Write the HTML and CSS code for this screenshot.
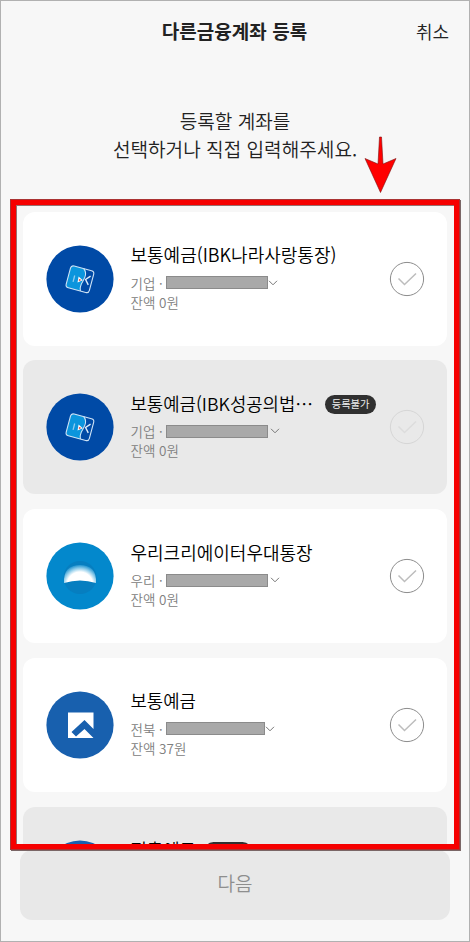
FILE: index.html
```html
<!DOCTYPE html>
<html lang="ko">
  <head>
    <meta charset="utf-8">
    <title>다른금융계좌 등록</title>
    <link rel="stylesheet" href="styles.css">
  </head>
  <body>
    <svg class="defs" width="0" height="0">
      <defs>
        <radialGradient id="wooriGlow" gradientUnits="userSpaceOnUse" cx="34" cy="43" r="21">
          <stop offset="0.62" stop-color="#ffffff" />
          <stop offset="0.8" stop-color="#8bcbea" />
          <stop offset="1" stop-color="#0384c8" />
        </radialGradient>
        <symbol id="ibk" viewBox="0 0 68 68">
          <circle cx="34" cy="34" r="33.6" fill="#004aa6" />
          <g transform="rotate(15 34 34)">
            <path d="M25 23h11q3 3 2 7t-1 8q-1 4 .5 7.500h-12.500q-3 0-3-3v-16.500q0-3 3-3z" fill="#0b95dd" />
            <rect x="22" y="23" width="24" height="22.500" rx="3" fill="none" stroke="#cfe4f6" stroke-width="1.100" />
            <path d="M35 23q4 3.500 3.200 8t-1.700 8q-.5 3.500 1 6.500" fill="none" stroke="#cfe4f6" stroke-width="1" />
            <path d="M28 32v6.500" stroke="#8dccef" stroke-width="1.300" />
            <path d="M43.500 28.500l-4 4.500 4 4.500" fill="none" stroke="#dcecf8" stroke-width="1.400" />
            <path d="M32 32l5 2.500-4.500 3.500z" fill="#fff" />
            <circle cx="34" cy="35" r="1" fill="#e4574e" />
          </g>
        </symbol>
        <symbol id="woori" viewBox="0 0 68 68">
          <circle cx="34" cy="34" r="33.600" fill="#0388cc" />
          <circle cx="34" cy="35.500" r="16.500" fill="#067ec0" />
          <path d="M18 41q-1-18 16-18t16 18q-16-5-32 0z" fill="url(#wooriGlow)" />
        </symbol>
        <symbol id="jeonbuk" viewBox="0 0 68 68">
          <circle cx="34" cy="34" r="33.600" fill="#1860ae" />
          <path d="M22 21.500H47.500V38L38.500 29 25.500 41L30 45.500 38.500 38 47.500 47H22z" fill="#fff" />
        </symbol>
        <symbol id="check" viewBox="0 0 36 36">
          <circle cx="18" cy="18" r="16.600" fill="none" stroke="var(--ring)" stroke-width="1" />
          <path d="M9.500 17.500l6 6 11.500-11" fill="none" stroke="var(--tick)" stroke-width="1.500" />
        </symbol>
        <symbol id="chevron" viewBox="0 0 10 6">
          <path d="M1 .8l4 4 4-4" fill="none" stroke="#777" stroke-width="1" />
        </symbol>
      </defs>
    </svg>

    <div class="app">
      <header class="header">
        <h1>다른금융계좌 등록</h1>
        <a class="cancel">취소</a>
      </header>

      <p class="intro">등록할 계좌를<br>선택하거나 직접 입력해주세요.</p>

      <ul class="accounts">
        <li class="card">
          <svg class="logo"><use href="#ibk" /></svg>
          <div class="info">
            <div class="name name-long">보통예금(IBK나라사랑통장)</div>
            <div class="number">기업 · <span class="mask"></span><svg class="chevron near"><use href="#chevron" /></svg></div>
            <div class="balance">잔액 0원</div>
          </div>
          <svg class="check"><use href="#check" /></svg>
        </li>
        <li class="card disabled">
          <svg class="logo"><use href="#ibk" /></svg>
          <div class="info">
            <div class="name"><span>보통예금(IBK성공의법⋯</span><span class="badge">등록불가</span></div>
            <div class="number">기업 · <span class="mask"></span><svg class="chevron"><use href="#chevron" /></svg></div>
            <div class="balance">잔액 0원</div>
          </div>
          <svg class="check"><use href="#check" /></svg>
        </li>
        <li class="card">
          <svg class="logo"><use href="#woori" /></svg>
          <div class="info">
            <div class="name name-long">우리크리에이터우대통장</div>
            <div class="number">우리 · <span class="mask"></span><svg class="chevron"><use href="#chevron" /></svg></div>
            <div class="balance">잔액 0원</div>
          </div>
          <svg class="check"><use href="#check" /></svg>
        </li>
        <li class="card">
          <svg class="logo"><use href="#jeonbuk" /></svg>
          <div class="info">
            <div class="name">보통예금</div>
            <div class="number">전북 · <span class="mask short"></span><svg class="chevron near"><use href="#chevron" /></svg></div>
            <div class="balance">잔액 37원</div>
          </div>
          <svg class="check"><use href="#check" /></svg>
        </li>
        <!-- only the top of this one shows above the button -->
        <li class="card disabled partial">
          <svg class="logo"><use href="#jeonbuk" /></svg>
          <div class="info">
            <div class="name">저축예금<span class="badge tight"></span></div>
          </div>
        </li>
      </ul>

      <button class="next">다음</button>

      <!-- guide marks over the list -->
      <svg class="arrow" viewBox="0 0 34 58">
        <path d="M16.500 1h2l1.500 27 13-5.500-15.500 34-15.500-34 13 5.500z" fill="#f00" stroke="#7a1010" stroke-width=".6" />
      </svg>
      <div class="frame"></div>
    </div>
  </body>
</html>
```

FILE: styles.css
```css
* {
  box-sizing: border-box;
}

body {
  margin: 0;
  font-family: "Noto Sans CJK KR", sans-serif;
  color: #222;
}

.defs {
  position: absolute;
}

.app {
  position: relative;
  display: flex;
  flex-direction: column;
  height: 942px;
  border: 1px solid #b1b1b1;
  background: #f7f7f7;
  overflow: hidden;
}

.header {
  display: grid;
  grid-template-columns: 1fr auto 1fr;
  align-items: center;
  height: 60px;
  padding: 0 20px 1px 19px;
}

.header h1 {
  grid-column: 2;
  margin: 0;
  font-size: 19px;
  font-weight: 600;
  letter-spacing: 0.05px;
}

.cancel {
  justify-self: end;
  font-size: 18px;
  font-weight: 350;
}

.intro {
  margin: 46px 0 0;
  font-size: 19.1px;
  font-weight: 350;
  line-height: 28px;
  text-align: center;
}

.accounts {
  display: flex;
  flex-direction: column;
  gap: 14.8px;
  height: 639px;
  margin: 43px 0 0;
  padding: 5.5px 22px 0 21.5px;
  list-style: none;
  overflow: hidden;
}

.card {
  --ring: #8c8c8c;
  --tick: #bdbdbd;
  display: flex;
  flex: none;
  align-items: center;
  height: 134px;
  padding: 0 22.5px 0 23.5px;
  border-radius: 12px;
  background: #fff;
}

.card.disabled {
  --ring: #d6d6d6;
  --tick: #dcdcdc;
  background: #e9e9e9;
}

.logo {
  flex: none;
  width: 68px;
  height: 68px;
}

.info {
  flex: 1;
  min-width: 0;
  margin-left: 16.5px;
  padding-bottom: 9px;
  white-space: nowrap;
}

.name {
  display: flex;
  align-items: center;
  height: 34px;
  margin-bottom: 2px;
  color: #000;
  font-size: 17.8px;
  font-weight: 350;
}

.name-long {
  font-size: 18px;
}

.badge {
  width: 51px;
  height: 19px;
  margin: 4px 0 0 12px;
  border-radius: 10px;
  background: #303030;
  color: #eee;
  font-size: 10.3px;
  font-weight: 400;
  line-height: 18px;
  text-align: center;
}

.badge.tight {
  width: 48px;
  margin-left: 8px;
}

.number,
.balance {
  display: flex;
  align-items: center;
  height: 19px;
  color: #808080;
  font-size: 13.5px;
  font-weight: 350;
  white-space: pre;
}

.mask {
  width: 102px;
  height: 13px;
  margin-left: -1px;
  border: 1px solid #8b8b8b;
  background: #a9a9a9;
}

.mask.short {
  width: 99px;
}

.chevron {
  width: 10px;
  height: 6px;
  margin-left: 2px;
}

.chevron.near {
  margin-left: 0;
}

.check {
  flex: none;
  width: 36px;
  height: 36px;
}

/* cut below the name line, laid out as the full card would be */
.card.partial {
  align-items: flex-start;
  height: 40px;
  padding-top: 33px;
  border-radius: 12px 12px 0 0;
}

.card.partial .info {
  margin-top: -7.5px;
}

.next {
  height: 70px;
  margin: 5px 19px 0;
  padding: 0 0 6px;
  border: 0;
  border-radius: 12px;
  background: #e8e8e8;
  color: #8e8e8e;
  font-family: inherit;
  font-size: 19px;
  font-weight: 350;
}

.arrow {
  position: absolute;
  top: 134.5px;
  left: 362px;
  width: 34px;
  height: 58px;
}

.frame {
  position: absolute;
  top: 198px;
  left: 9px;
  width: 450px;
  height: 651px;
  border: 6px solid #f60000;
  outline: 1px solid #a33;
  outline-offset: -1px;
  box-shadow: inset 1px 1px 0 #987070, 1px 1px 0 #7a6666;
}
```
